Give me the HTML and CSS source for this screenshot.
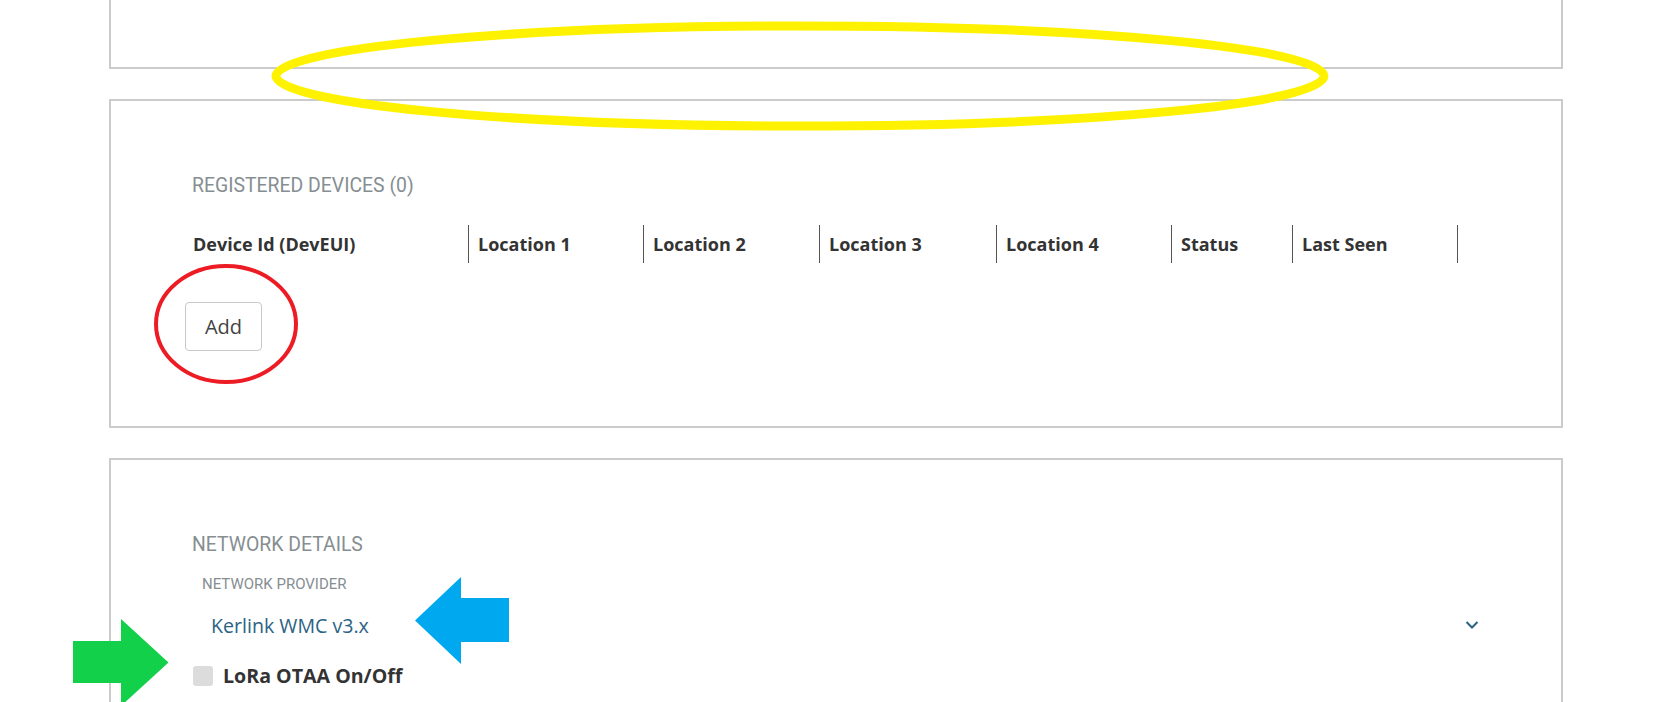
FILE: index.html
```html
<!DOCTYPE html>
<html>
<head>
<meta charset="utf-8">
<link rel="stylesheet" href="styles.css">
</head>
<body>
<div class="page">
  <section class="panel panel-top"></section>

  <section class="panel panel-devices">
    <h2 class="section-title">REGISTERED DEVICES (0)</h2>
    <div class="table-head">
      <div class="th th-dev">Device Id (DevEUI)</div>
      <div class="th">Location 1</div>
      <div class="th">Location 2</div>
      <div class="th">Location 3</div>
      <div class="th">Location 4</div>
      <div class="th">Status</div>
      <div class="th">Last Seen</div>
    </div>
    <button class="btn-add">Add</button>
  </section>

  <section class="panel panel-network">
    <h2 class="section-title">NETWORK DETAILS</h2>
    <div class="form-group">
      <div class="field-label">NETWORK PROVIDER</div>
      <div class="select">
        <span class="select-value">Kerlink WMC v3.x</span>
        <svg class="chevron" width="14" height="10" viewBox="0 0 14 10"><path d="M1.5 2 L7 7.5 L12.5 2" fill="none" stroke="#2b6384" stroke-width="2"/></svg>
      </div>
    </div>
    <label class="check-row">
      <span class="checkbox"></span>
      <span class="check-label">LoRa OTAA On/Off</span>
    </label>
  </section>
</div>

<svg class="mark mark-yellow" width="1080" height="130" viewBox="0 0 1080 130">
  <ellipse cx="540" cy="55" rx="524" ry="50" fill="none" stroke="#fff200" stroke-width="9"/>
</svg>
<svg class="mark mark-red" width="160" height="130" viewBox="0 0 160 130">
  <ellipse cx="80" cy="65" rx="70" ry="58" fill="none" stroke="#ed1c24" stroke-width="4"/>
</svg>
<svg class="mark mark-blue" width="100" height="90" viewBox="0 0 100 90">
  <polygon points="0,43.5 46,0 46,21 94,21 94,65 46,65 46,87" fill="#00a8ef"/>
</svg>
<svg class="mark mark-green" width="100" height="90" viewBox="0 0 100 90">
  <polygon points="0,22 48,22 48,0 95.5,43.5 48,87 48,64 0,64" fill="#12d04a"/>
</svg>
</body>
</html>
```

FILE: styles.css
```css
html, body {
  margin: 0;
  padding: 0;
  background: #fff;
}
body {
  height: 702px;
  overflow: hidden;
  position: relative;
  font-family: "Open Sans", "Liberation Sans", sans-serif;
}
.page {
  margin-left: 109px;
  width: 1454px;
  display: flex;
  flex-direction: column;
  gap: 30px;
  margin-top: -132px;
}
.panel {
  border: 2px solid #cbcbcb;
  box-sizing: border-box;
  padding: 0 74px 0 74px;
}
.panel-top {
  height: 201px;
}
.panel-devices {
  height: 329px;
  padding-top: 73px;
}
.panel-network {
  height: 420px;
  padding-top: 73px;
}
.section-title {
  margin: 0;
  padding-left: 7px;
  font-family: Roboto, "Liberation Sans", sans-serif;
  font-weight: 400;
  font-size: 19.4px;
  line-height: 24px;
  color: #868e92;
}
.table-head {
  display: grid;
  grid-template-columns: 284px 175px 176px 177px 175px 121px 165px;
  margin-top: 27px;
}
.th {
  height: 38px;
  border-right: 1px solid #555;
  box-sizing: border-box;
  padding-left: 9px;
  display: flex;
  align-items: center;
  font-weight: 700;
  font-size: 18px;
  color: #333;
  white-space: nowrap;
}
.th-dev {
  padding-left: 8px;
}
.btn-add {
  display: block;
  margin-top: 39px;
  width: 77px;
  height: 49px;
  border: 1.5px solid #c8c8c8;
  border-radius: 4px;
  background: #fff;
  font-family: "Open Sans", "Liberation Sans", sans-serif;
  font-size: 20px;
  color: #444;
  padding: 0;
}
.form-group {
  padding-left: 16px;
  margin-top: 17px;
}
.field-label {
  font-family: Roboto, "Liberation Sans", sans-serif;
  font-size: 15px;
  line-height: 20px;
  color: #868e92;
  padding-left: 1px;
}
.select {
  display: flex;
  align-items: center;
  justify-content: space-between;
  height: 46px;
  padding: 0 8px 0 10px;
  margin-top: 8px;
}
.select-value {
  font-size: 19.6px;
  color: #2b6384;
}
.chevron {
  display: block;
}
.check-row {
  display: flex;
  align-items: center;
  gap: 10px;
  margin-top: 14px;
  padding-left: 8px;
}
.checkbox {
  width: 20px;
  height: 20px;
  border-radius: 3px;
  background: #dcdcdc;
  flex: none;
}
.check-label {
  font-weight: 700;
  font-size: 19.6px;
  color: #333;
}
.mark {
  position: absolute;
  pointer-events: none;
}
.mark-yellow {
  left: 260px;
  top: 21px;
}
.mark-red {
  left: 146px;
  top: 259px;
}
.mark-blue {
  left: 415px;
  top: 577px;
}
.mark-green {
  left: 73px;
  top: 619px;
}
```
